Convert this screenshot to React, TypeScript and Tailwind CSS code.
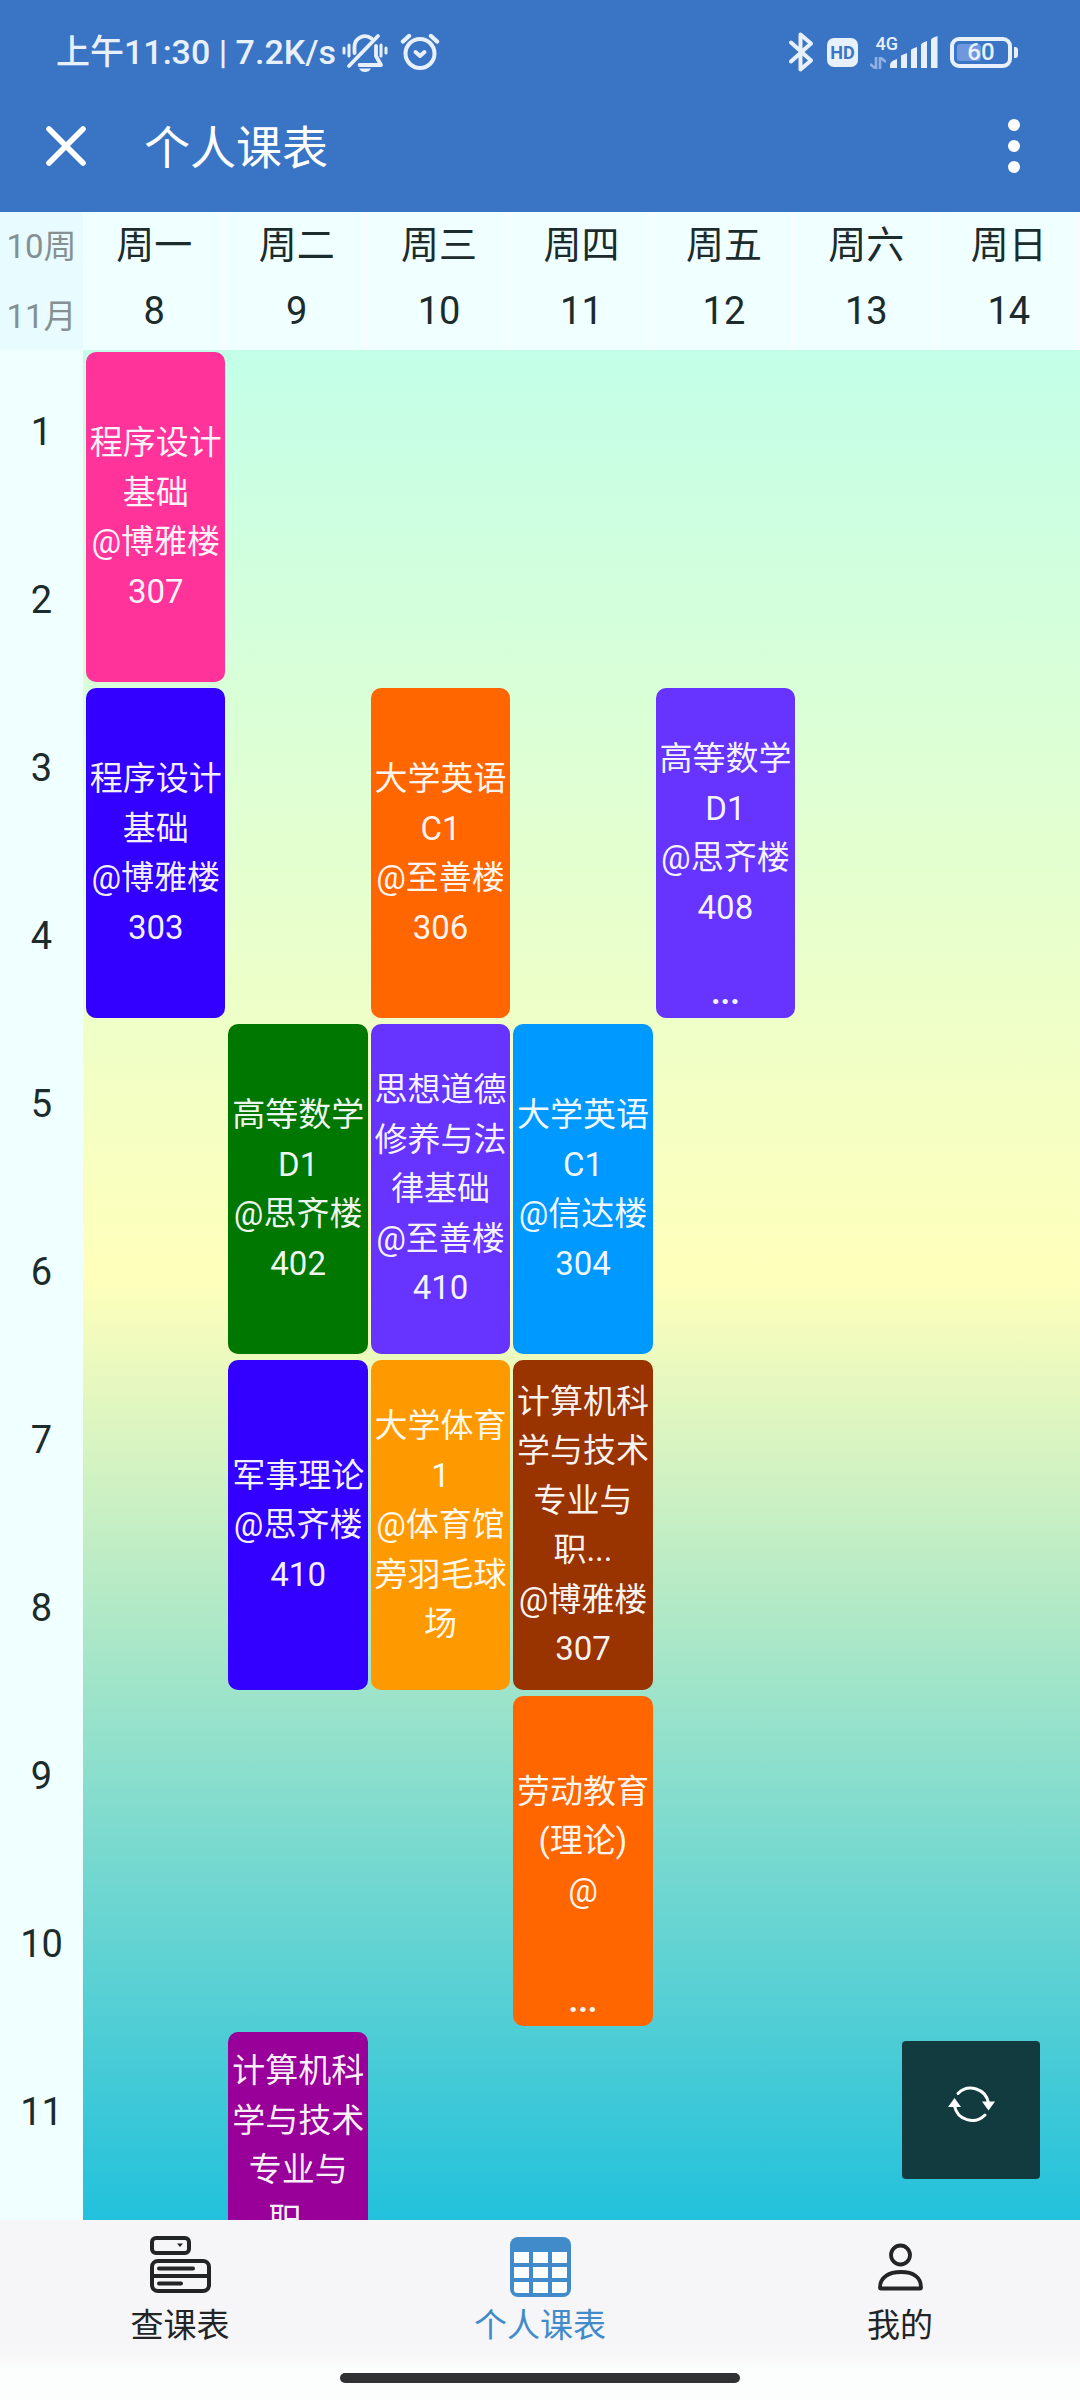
import React from "react";

type Course = { day: number; start: number; color: string; lines: string[]; more?: boolean; cut?: boolean };

const DAYS = ["周一", "周二", "周三", "周四", "周五", "周六", "周日"];
const PERIODS = ["1", "2", "3", "4", "5", "6", "7", "8", "9", "10", "11", ""];

const COURSES: Course[] = [
  { day: 0, start: 1, color: "bg-[#ff3399]", lines: ["程序设计", "基础", "@博雅楼", "307"] },
  { day: 0, start: 3, color: "bg-[#3300ff]", lines: ["程序设计", "基础", "@博雅楼", "303"] },
  { day: 2, start: 3, color: "bg-[#ff6600]", lines: ["大学英语", "C1", "@至善楼", "306"] },
  { day: 4, start: 3, color: "bg-[#6633ff]", lines: ["高等数学", "D1", "@思齐楼", "408"], more: true },
  { day: 1, start: 5, color: "bg-[#007700]", lines: ["高等数学", "D1", "@思齐楼", "402"] },
  { day: 2, start: 5, color: "bg-[#6633ff]", lines: ["思想道德", "修养与法", "律基础", "@至善楼", "410"] },
  { day: 3, start: 5, color: "bg-[#0099ff]", lines: ["大学英语", "C1", "@信达楼", "304"] },
  { day: 1, start: 7, color: "bg-[#3300ff]", lines: ["军事理论", "@思齐楼", "410"] },
  { day: 2, start: 7, color: "bg-[#ff9900]", lines: ["大学体育", "1", "@体育馆", "旁羽毛球", "场"] },
  { day: 3, start: 7, color: "bg-[#993300]", lines: ["计算机科", "学与技术", "专业与", "职...", "@博雅楼", "307"] },
  { day: 3, start: 9, color: "bg-[#ff6600]", lines: ["劳动教育", "(理论)", "@"], more: true },
  { day: 1, start: 11, color: "bg-[#990099]", lines: ["计算机科", "学与技术", "专业与", "职..."], cut: true },
];

function StatusBar() {
  return (
    <div className="flex h-[104px] items-center justify-between pl-14 pr-[62px] text-[#e8f0fc]">
      <div className="flex items-center">
        <span className="whitespace-nowrap text-[34px] font-medium leading-10">上午11:30 | 7.2K/s</span>
        <svg className="ml-1.5 h-10 w-[46px]" viewBox="0 0 46 40" fill="none" stroke="currentColor" strokeWidth="3.8" strokeLinecap="round" strokeLinejoin="round" aria-label="静音">
          <path d="M12.500 21V14.500a10.500 10.500 0 0 1 17-8M34 14v10l5 9H17.500" />
          <path d="M36 4L7 34" />
          <path d="M17 36.500h12q-2 3.500-6 3.500t-6-3.500Z" fill="currentColor" stroke="none" />
          <path d="M2 16v5M7 13v11M39 13v11M44 16v5" strokeWidth="3" />
        </svg>
        <svg className="ml-3 h-10 w-10" viewBox="0 0 40 40" fill="none" stroke="currentColor" strokeWidth="4" strokeLinecap="round" strokeLinejoin="round" aria-label="闹钟">
          <circle cx="20" cy="21.500" r="14.500" />
          <path d="M15.500 20l4.500 4 4.500-4" />
          <path d="M3 9.500L9 4M37 9.500L31 4" strokeWidth="4.400" />
        </svg>
      </div>
      <div className="flex items-center">
        <svg className="h-10 w-6" viewBox="0 0 24 40" fill="none" stroke="currentColor" strokeWidth="4" strokeLinejoin="round" strokeLinecap="round" aria-label="蓝牙">
          <path d="M2 10.500L22 28.500 11.500 37.500V2.500L22 11.500 2 29.500" />
        </svg>
        <span className="ml-3.5 flex h-[29px] w-[31px] items-center justify-center rounded-[7px] bg-[#e8f0fc] text-[18px] font-bold text-[#3a74c5]">HD</span>
        <span className="ml-3 flex h-[34px] w-7 flex-col items-end justify-between">
          <span className="text-[18px] font-medium leading-[18px]">4G</span>
          <svg className="mr-3 h-3 w-4 opacity-50" viewBox="0 0 16 12" fill="none" stroke="currentColor" strokeWidth="2.600" aria-hidden="true">
            <path d="M6 0v12M0 7l5 4M10 12V0M16 5l-5-4" />
          </svg>
        </span>
        <svg className="-ml-2 h-8 w-12" viewBox="0 0 48 32" fill="currentColor" aria-label="信号">
          <path d="M0 32v-3q0-4 7-6v9zM11 32V19.500l6-2.500v15zM21 32V14q0-1 6-3v21zM31 32V9q0-2 6-4v27zM41 32V4q0-2 6.500-4v32z" />
        </svg>
        <span className="relative ml-3 flex h-[31px] w-[62px] items-center justify-center rounded-[9px] border-4 border-[#e8f0fc]">
          <span className="absolute bottom-[3px] left-[3px] top-[3px] w-6 rounded-[3px] bg-[#6f97de]" />
          <span className="relative text-[24px] font-medium leading-6">60</span>
        </span>
        <span className="ml-[2px] h-[11px] w-1 rounded-r-[3px] bg-[#e8f0fc]" />
      </div>
    </div>
  );
}

function TitleBar() {
  return (
    <div className="flex h-[108px] items-start justify-between pl-[46px] pr-[58px] text-white">
      <div className="flex h-[84px] items-center">
        <button type="button" aria-label="关闭" className="h-10 w-10">
          <svg className="h-10 w-10" viewBox="0 0 40 40" stroke="currentColor" strokeWidth="5.600" strokeLinecap="round">
            <path d="M3 3l34 34M37 3L3 37" />
          </svg>
        </button>
        <h1 className="ml-[58px] mt-1 text-[46px] leading-[60px]">个人课表</h1>
      </div>
      <button type="button" aria-label="更多" className="flex h-[84px] w-4 items-center justify-center">
        <svg className="h-14 w-3 shrink-0" viewBox="0 0 12 56" fill="currentColor">
          <circle cx="6" cy="7" r="6" />
          <circle cx="6" cy="28" r="6" />
          <circle cx="6" cy="49" r="6" />
        </svg>
      </button>
    </div>
  );
}

function CourseCard({ course }: { course: Course }) {
  return (
    <div className={`flex h-[330px] flex-col overflow-hidden rounded-[10px] text-center text-[33px] leading-normal text-white/95 ${course.color}`}>
      <div className={course.cut ? "flex flex-1 flex-col pt-3.5" : "flex flex-1 flex-col justify-center"}>
        {course.lines.map((line, i) => (
          <span key={i} className="whitespace-nowrap">{line}</span>
        ))}
      </div>
      {course.more && <span className="h-10 font-bold leading-[30px]">...</span>}
    </div>
  );
}

function Timetable() {
  return (
    <table className="w-full table-fixed border-collapse text-[#1c2b2b]">
      <colgroup>
        <col className="w-[83px]" />
        {DAYS.map((d) => <col key={d} />)}
      </colgroup>
      <thead>
        <tr className="h-[138px] bg-[#f0ffff] align-top">
          <th scope="col" className="bg-[#e8fbff] p-0 pt-2.5 text-[33px] font-normal text-[#869092]">
            <span className="block leading-[50px]">10周</span>
            <span className="mt-5 block leading-[50px]">11月</span>
          </th>
          {DAYS.map((d, i) => (
            <th key={d} scope="col" className="p-0 pt-2 text-[38px] font-normal shadow-[inset_-4px_0_#f7fcff]">
              <span className="block leading-[50px]">{d}</span>
              <span className="mt-4 block leading-[50px]">{8 + i}</span>
            </th>
          ))}
        </tr>
      </thead>
      <tbody>
        {PERIODS.map((label, row) => (
          <tr key={row} className="h-[168px]">
            <th scope="row" className="bg-[#f0ffff] p-0 pb-1 text-[38px] font-normal">{label}</th>
            {DAYS.map((d, day) => {
              const course = COURSES.find((c) => c.day === day && c.start === row + 1);
              if (course) {
                return (
                  <td key={d} rowSpan={2} className="p-0 pl-[3px] pt-[2px] align-top">
                    <CourseCard course={course} />
                  </td>
                );
              }
              if (COURSES.some((c) => c.day === day && c.start === row)) return null;
              return <td key={d} />;
            })}
          </tr>
        ))}
      </tbody>
    </table>
  );
}

function BottomNav() {
  return (
    <nav className="shrink-0 bg-linear-to-b from-[#f6f5f7] from-72% to-[#fcfdfd] to-82%">
      <div className="grid grid-cols-3 text-[33px] leading-10 text-[#222426]">
        <a href="#search" className="flex flex-col items-center pt-3.5">
          <svg className="h-16 w-16" viewBox="0 0 64 64" fill="none" stroke="currentColor" strokeWidth="4" strokeLinecap="round" strokeLinejoin="round" aria-hidden="true">
            <rect x="4" y="4" width="37" height="15" rx="4" />
            <rect x="4" y="27" width="57" height="30" rx="6" />
            <path d="M4 42h57M11 34.500h34M11 49.500h22" />
            <path d="M29 9.500h6L32 13z" fill="currentColor" stroke="none" />
          </svg>
          <span className="mt-2">查课表</span>
        </a>
        <a href="#mine" aria-current="page" className="flex flex-col items-center pt-3.5 text-[#428bca]">
          <svg className="h-16 w-16" viewBox="0 0 64 64" aria-hidden="true">
            <rect x="2" y="3" width="61" height="60" rx="8" fill="currentColor" />
            <path d="M6 18h15v11H6zM25 18h15v11H25zM44 18h15v11H44zM6 33h15v11H6zM25 33h15v11H25zM44 33h15v11H44zM6 48h15v11H9q-3 0-3-3zM25 48h15v11H25zM44 48h15v8q0 3-3 3H44z" fill="#fcfdfe" />
          </svg>
          <span className="mt-2">个人课表</span>
        </a>
        <a href="#me" className="flex flex-col items-center pt-3.5">
          <svg className="h-16 w-16" viewBox="0 0 64 64" fill="none" stroke="currentColor" strokeWidth="3.800" strokeLinejoin="round" aria-hidden="true">
            <circle cx="32.500" cy="21" r="9.500" />
            <path d="M12 53.500C12 43 21 38 33 38s20 5 20 15.500q0 1-1 1H13q-1 0-1-1Z" />
          </svg>
          <span className="mt-2">我的</span>
        </a>
      </div>
      <div className="mx-auto mb-[17px] mt-[27px] h-2.5 w-[37%] rounded-full bg-[#303133]" />
    </nav>
  );
}

export default function App() {
  return (
    <div className="flex h-screen flex-col overflow-hidden font-['Roboto','Noto_Sans_CJK_SC',sans-serif]">
      <header className="shrink-0 bg-[#3a74c5]">
        <StatusBar />
        <TitleBar />
      </header>
      <main className="relative min-h-0 flex-1 overflow-hidden bg-[linear-gradient(180deg,#c3ffe8_7%,#ffffbb_53%,#22c1dc_100%)]">
        <Timetable />
        <button type="button" aria-label="刷新" className="absolute bottom-[41px] right-10 flex h-[138px] w-[138px] items-center justify-center rounded bg-[#113b3e] pb-3 text-white">
          <svg className="h-12 w-12" viewBox="0 0 48 48" fill="none" stroke="currentColor" strokeWidth="3" strokeLinecap="round" aria-hidden="true">
            <path d="M11 13.500A18 18 0 0 1 41.500 23M38 35A18 18 0 0 1 7.500 26" />
            <path d="M35 21.500h13l-6.500 9zM1 27h13L7.500 18z" fill="currentColor" stroke="none" />
          </svg>
        </button>
      </main>
      <BottomNav />
    </div>
  );
}
